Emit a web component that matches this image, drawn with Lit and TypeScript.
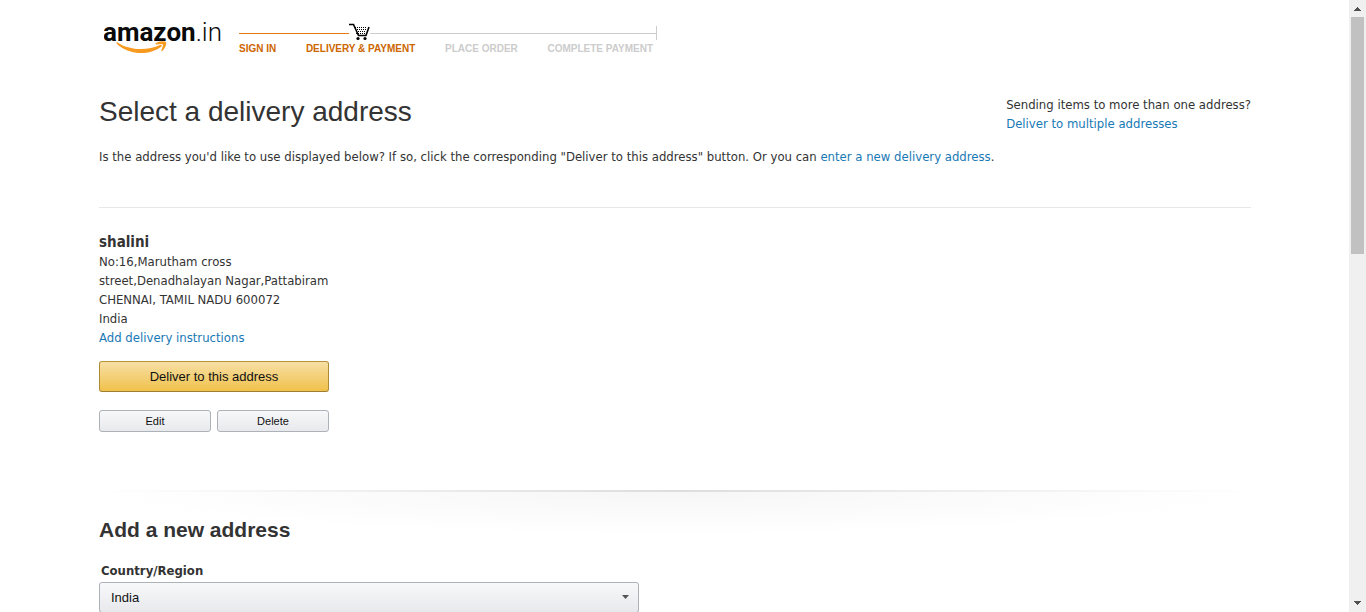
import { LitElement, html, css, svg } from "lit";
import { customElement, property } from "lit/decorators.js";

const DOTS = [0, 1, 2, 3].flatMap((row) =>
  [0, 1, 2, 3, 4, 5].map((col) => ({ x: 6 + col * 2 + (row > 1 ? 1 : 0), y: 4 + row * 2 })),
).filter((d) => d.x < 18 - (d.y - 4) / 3);

@customElement("site-logo")
class SiteLogo extends LitElement {
  static styles = css`
    :host { display: block; }
    .logo { display: block; }
    .name { font-family: Roboto, "Liberation Sans", sans-serif; font-size: 26px; fill: #0a0a0a; }
    .bold { font-weight: 700; }
    .light { font-weight: 300; }
  `;
  render() {
    return html`<svg class="logo" width="118" height="38" viewBox="0 0 118 38" role="img" aria-label="amazon.in">
      <text class="name" x="-1" y="23"><tspan class="bold">amazon</tspan><tspan class="light">.in</tspan></text>
      <path d="M13.2 24.2 C24 32 43 33.4 56 27 C57.6 26.3 58.6 27.6 57.2 28.8 C45 38 25 37.2 13 26 C12.2 25 12.4 23.7 13.2 24.2Z" fill="#f79a20" />
      <path d="M51.6 25.6 C54.2 23.2 59 22.8 61.6 23.8 C62.9 24.5 61.9 30 58.2 33 C57.6 33.4 57 33 57.3 32.3 C58.3 30 59.5 27.2 58.8 26.5 C58 25.8 54.9 26.2 52.4 26.5 C51.6 26.6 51.2 26.1 51.6 25.6Z" fill="#f79a20" />
    </svg>`;
  }
}

@customElement("order-progress")
class OrderProgress extends LitElement {
  @property({ type: Number }) current = 1;
  @property({ attribute: false }) steps: string[] = [];
  static styles = css`
    :host { display: block; width: 418px; }
    .track { display: grid; grid-template-columns: 110px 21px 1fr 1px; align-items: center; height: 18px; }
    .line, .end { margin-top: 2px; background: #ccc; }
    .line { height: 1px; }
    .line.done { background: #e47911; }
    .end { height: 14px; }
    .cart { display: block; }
    .steps { display: flex; justify-content: space-between; list-style: none; margin: 0; padding: 0 4px 0 0; font: 700 10px/16px "Liberation Sans", Arial, sans-serif; color: #ccc; white-space: nowrap; }
    .active { color: #c60; }
  `;
  render() {
    return html`<div class="track">
        <span class="line done"></span>
        <svg class="cart" width="21" height="18" viewBox="0 0 21 18" aria-hidden="true">
          <path d="M0 1.5H4.5L9.5 12.5H17L20 4" fill="none" stroke="#000" stroke-width="1.6" />
          ${DOTS.map((d) => svg`<rect x=${d.x} y=${d.y} width="1" height="1" />`)}
          <circle cx="9" cy="15.5" r="1.6" /><circle cx="16" cy="15.5" r="1.6" />
        </svg>
        <span class="line"></span>
        <span class="end"></span>
      </div>
      <ol class="steps">
        ${this.steps.map((s, i) => html`<li class=${i <= this.current ? "active" : ""}>${s}</li>`)}
      </ol>`;
  }
}

@customElement("scroll-rail")
class ScrollRail extends LitElement {
  static styles = css`
    :host { display: flex; flex-direction: column; width: 17px; background: #f0f0f0; }
    .arrow { display: block; flex: none; }
    .track { flex: 1; padding: 0 2px; }
    .thumb { height: 41%; background: #c1c1c1; }
  `;
  render() {
    return html`<svg class="arrow" width="17" height="17" viewBox="0 0 17 17" shape-rendering="crispEdges"><path d="M8 7h1v1h1v1h1v1h1v1H5v-1h1V9h1V8h1z" fill="#505050" /></svg>
      <div class="track"><div class="thumb"></div></div>
      <svg class="arrow" width="17" height="17" viewBox="0 0 17 17" shape-rendering="crispEdges"><path d="M5 6h7v1h-1v1h-1v1H9v1H8V9H7V8H6V7H5z" fill="#505050" /></svg>`;
  }
}

@customElement("app-root")
class AppRoot extends LitElement {
  static styles = css`
    :host { display: flex; height: 100vh; overflow: hidden; background: #fff; color: #333; font: 13px/19px "DejaVu Sans Condensed", "Noto Sans", sans-serif; }
    .page { flex: 1; min-width: 0; overflow: hidden; padding: 0 98px 0 99px; }
    scroll-rail { flex: none; }
    .header { display: flex; gap: 17px; padding: 18px 0 0 5px; height: 76px; box-sizing: border-box; }
    .progress { padding-top: 5px; }
    a { color: #1879b5; text-decoration: none; }
    .intro { display: flex; justify-content: space-between; padding-bottom: 41px; border-bottom: 1px solid #e7e7e7; }
    .lead { padding-top: 18px; }
    h1, h2, p, address { margin: 0; font-style: normal; }
    h1 { font: 400 28px/36px "Liberation Sans", Arial, sans-serif; margin-bottom: 17px; }
    .multiple { padding-top: 19px; }
    .card { width: 230px; padding: 24px 0 58px; }
    .name { display: block; font-size: 15px; line-height: 20px; font-weight: 700; }
    button, select { font-family: "Liberation Sans", Arial, sans-serif; color: #111; border: 1px solid #adb1b8; border-radius: 3px; background: linear-gradient(#f7f8fa, #e7e9ec); box-sizing: border-box; }
    button { padding: 0; font-size: 11px; height: 22px; cursor: pointer; }
    .primary { width: 100%; height: 31px; margin: 14px 0 18px; font-size: 13px; border-color: #b8923a #ac8a36 #a07f30; background: linear-gradient(#f7dfa5, #f0c14b); }
    .actions { display: grid; grid-template-columns: 1fr 1fr; gap: 6px; }
    .new { padding-top: 28px; background: radial-gradient(ellipse 50% 44px at 50% 0, #f6f6f6, #fff) no-repeat; position: relative; }
    .edge { position: absolute; top: 0; left: 0; right: 0; height: 2px; background: linear-gradient(90deg, #fff, #ddd 50%, #fff); }
    h2 { font: 700 21px/24px "Liberation Sans", Arial, sans-serif; margin-bottom: 19px; }
    label { display: block; font-weight: 700; padding: 0 2px 2px; }
    .pick { position: relative; max-width: 540px; }
    select { display: block; width: 100%; height: 31px; padding: 0 11px; font-size: 13px; appearance: none; }
    .caret { position: absolute; right: 10px; top: 13px; pointer-events: none; }
  `;
  render() {
    return html`<main class="page">
        <header class="header">
          <site-logo></site-logo>
          <order-progress class="progress" .steps=${["SIGN IN", "DELIVERY & PAYMENT", "PLACE ORDER", "COMPLETE PAYMENT"]}></order-progress>
        </header>
        <section class="intro">
          <div class="lead">
            <h1>Select a delivery address</h1>
            <p>Is the address you'd like to use displayed below? If so, click the corresponding "Deliver to this address" button. Or you can <a href="#new">enter a new delivery address</a>.</p>
          </div>
          <div class="multiple">
            <p>Sending items to more than one address?</p>
            <a href="#multiple">Deliver to multiple addresses</a>
          </div>
        </section>
        <section class="card">
          <address>
            <strong class="name">shalini</strong>
            No:16,Marutham cross<br />street,Denadhalayan Nagar,Pattabiram<br />CHENNAI, TAMIL NADU 600072<br />India
          </address>
          <a href="#instructions">Add delivery instructions</a>
          <button class="primary" type="button">Deliver to this address</button>
          <div class="actions">
            <button type="button">Edit</button>
            <button type="button">Delete</button>
          </div>
        </section>
        <section class="new" id="new">
          <div class="edge"></div>
          <h2>Add a new address</h2>
          <label for="country">Country/Region</label>
          <div class="pick">
            <select id="country"><option>India</option></select>
            <svg class="caret" width="7" height="4" viewBox="0 0 7 4" aria-hidden="true"><path d="M0 0h7L3.5 4z" fill="#555" /></svg>
          </div>
        </section>
      </main>
      <scroll-rail aria-hidden="true"></scroll-rail>`;
  }
}
